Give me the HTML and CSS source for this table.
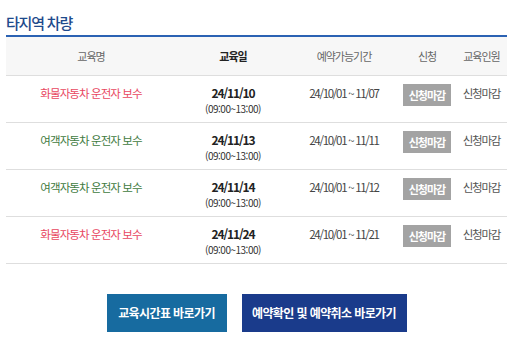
FILE: index.html
```html
<!DOCTYPE html>
<html lang="ko">
<head>
<meta charset="utf-8">
<link rel="stylesheet" href="styles.css">
</head>
<body>
<div class="wrap">
  <h2 class="title">타지역 차량</h2>
  <table class="tbl">
    <colgroup>
      <col class="c1"><col class="c2"><col class="c3"><col class="c4"><col class="c5">
    </colgroup>
    <thead>
      <tr>
        <th>교육명</th>
        <th class="strong">교육일</th>
        <th>예약가능기간</th>
        <th>신청</th>
        <th>교육인원</th>
      </tr>
    </thead>
    <tbody>
      <tr>
        <td class="name red">화물자동차 운전자 보수</td>
        <td><div class="date">24/11/10</div><div class="time">(09:00~13:00)</div></td>
        <td class="period">24/10/01 ~ 11/07</td>
        <td><span class="badge">신청마감</span></td>
        <td class="cnt">신청마감</td>
      </tr>
      <tr>
        <td class="name green">여객자동차 운전자 보수</td>
        <td><div class="date">24/11/13</div><div class="time">(09:00~13:00)</div></td>
        <td class="period">24/10/01 ~ 11/11</td>
        <td><span class="badge">신청마감</span></td>
        <td class="cnt">신청마감</td>
      </tr>
      <tr>
        <td class="name green">여객자동차 운전자 보수</td>
        <td><div class="date">24/11/14</div><div class="time">(09:00~13:00)</div></td>
        <td class="period">24/10/01 ~ 11/12</td>
        <td><span class="badge">신청마감</span></td>
        <td class="cnt">신청마감</td>
      </tr>
      <tr>
        <td class="name red">화물자동차 운전자 보수</td>
        <td><div class="date">24/11/24</div><div class="time">(09:00~13:00)</div></td>
        <td class="period">24/10/01 ~ 11/21</td>
        <td><span class="badge">신청마감</span></td>
        <td class="cnt">신청마감</td>
      </tr>
    </tbody>
  </table>
  <div class="btns">
    <a class="btn btn1" href="#">교육시간표 바로가기</a>
    <a class="btn btn2" href="#">예약확인 및 예약취소 바로가기</a>
  </div>
</div>
</body>
</html>
```
FILE: styles.css
```css
html, body {
  margin: 0;
  padding: 0;
  background: #fff;
}
body {
  font-family: "Noto Sans CJK KR", "Noto Sans", sans-serif;
  color: #333;
  letter-spacing: -0.8px;
}
.wrap {
  padding: 0 14px 0 6px;
}
.title {
  margin: 0;
  padding: 11px 0 0;
  height: 24px;
  font-size: 15px;
  line-height: 24px;
  font-weight: 500;
  color: #1e4a8c;
  letter-spacing: -1.2px;
}
.tbl {
  width: 501px;
  border-collapse: collapse;
  table-layout: fixed;
  border-top: 2px solid #2b62b3;
}
.c1 { width: 170px; }
.c2 { width: 114px; }
.c3 { width: 108px; }
.c4 { width: 58px; }
.c5 { width: 51px; }
.tbl th {
  height: 39px;
  box-sizing: border-box;
  padding: 0;
  background: #f7f7f7;
  border-bottom: 1px solid #dedede;
  font-size: 11px;
  font-weight: 400;
  color: #666;
  text-align: center;
  vertical-align: middle;
  letter-spacing: -1px;
}
.tbl th.strong {
  font-weight: 700;
  color: #222;
}
.tbl td {
  height: 47px;
  box-sizing: border-box;
  padding: 9px 0 0;
  border-bottom: 1px solid #dedede;
  text-align: center;
  vertical-align: top;
  font-size: 11.5px;
  line-height: 16px;
}
.name { letter-spacing: -0.9px; }
.name.red { color: #e8475f; }
.name.green { color: #3f7b3f; }
.date {
  font-weight: 700;
  font-size: 12px;
  letter-spacing: -1.1px;
  color: #222;
}
.time {
  font-size: 10px;
  letter-spacing: -0.5px;
  color: #333;
}
.period {
  font-size: 11px;
  letter-spacing: -1.3px;
  color: #444;
}
.badge {
  display: inline-block;
  width: 48px;
  height: 22px;
  line-height: 22px;
  margin-top: -1px;
  background: #a3a3a3;
  color: #fff;
  font-weight: 700;
  font-size: 11px;
  letter-spacing: -1px;
}
.cnt {
  color: #555;
  font-size: 11px;
  letter-spacing: -1.2px;
}
.btns {
  display: flex;
  justify-content: center;
  gap: 15px;
  padding-top: 30px;
  width: 501px;
}
.btn {
  display: flex;
  align-items: center;
  justify-content: center;
  height: 38px;
  color: #fff;
  text-decoration: none;
  font-size: 12px;
  font-weight: 700;
  letter-spacing: -0.6px;
}
.btn1 {
  width: 120px;
  background: #176ba0;
}
.btn2 {
  width: 165px;
  background: #1a3b8b;
}
```
